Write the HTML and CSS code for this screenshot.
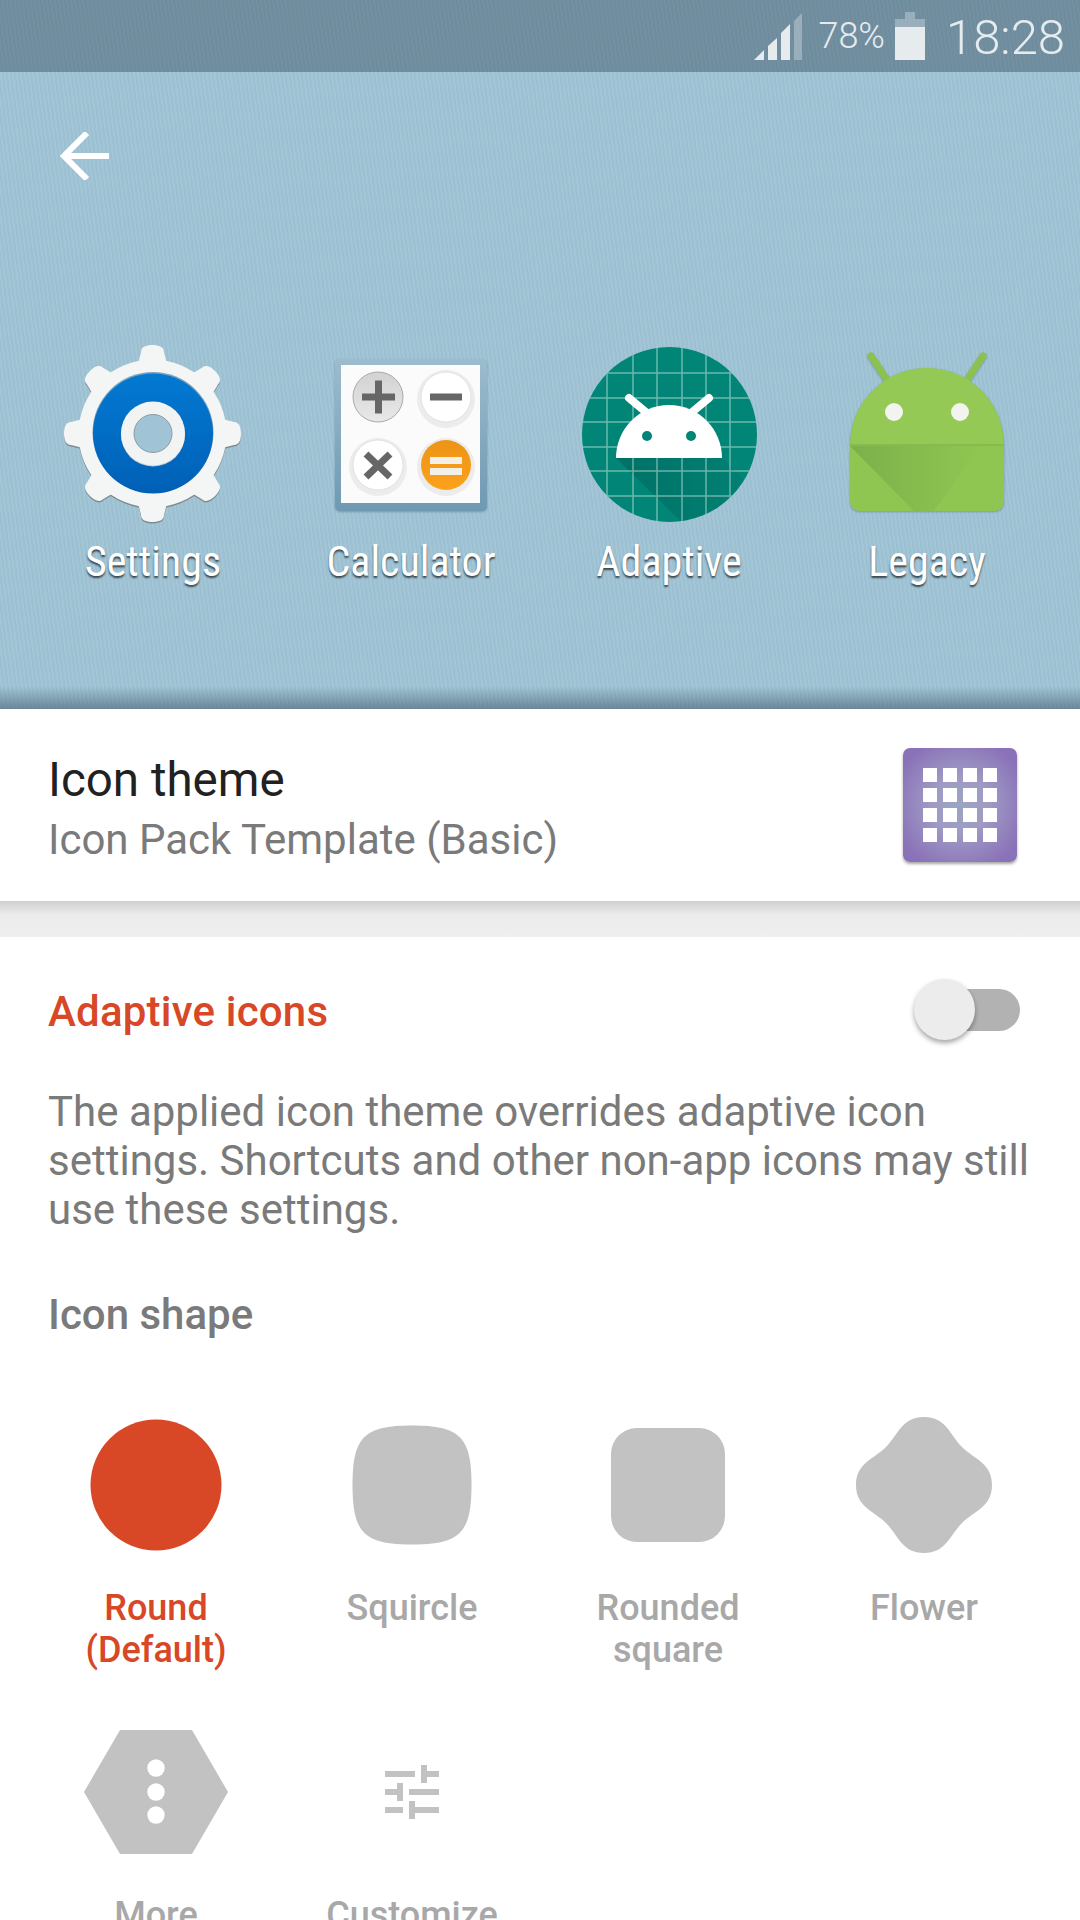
FILE: index.html
```html
<!DOCTYPE html>
<html lang="en">
<head>
<meta charset="utf-8">
<title>Icon theme</title>
<link rel="stylesheet" href="styles.css">
</head>
<body>
<div class="page">
  <header class="hero">
    <div class="status">
      <svg class="signal" viewBox="754 13 48 47"><path fill="#e6ebee" d="M754 60l10-10v10zM768 46l9-8v22h-9zM781 33l9-9v36h-9z"/><path fill="#e6ebee" opacity=".35" d="M794 21l8-8v47h-8z"/></svg>
      <span class="pct">78%</span>
      <svg class="battery" viewBox="0 0 30 48"><path fill="#e6ebee" opacity=".35" d="M10 0h10v7h10v8H0V7h10z"/><path fill="#e6ebee" d="M0 15h30v33H0z"/></svg>
      <span class="clock">18:28</span>
    </div>
    <div class="toolbar">
      <svg class="back" viewBox="0 0 50 48"><path d="M49 24H4M27 1L4 24l23 23" fill="none" stroke="#fff" stroke-width="6"/></svg>
    </div>
    <div class="apps">
      <div class="app">
        <svg class="app-icon" viewBox="53 340 200 190">
          <defs>
            <linearGradient id="blue" x1="0" y1="0" x2="0" y2="1"><stop offset="0" stop-color="#0379d2"/><stop offset="1" stop-color="#0060b6"/></linearGradient>
            <g id="tooth"><path d="M134.500 378L141 352c0-5 5-7 11.500-7s11.500 2 11.500 7l6.500 26z"/></g>
          </defs>
          <g fill="#7e8b90" transform="translate(0 1.500)">
            <circle cx="152.500" cy="433.500" r="74"/>
            <use href="#tooth"/><use href="#tooth" transform="rotate(45 152.500 433.500)"/><use href="#tooth" transform="rotate(90 152.500 433.500)"/><use href="#tooth" transform="rotate(135 152.500 433.500)"/><use href="#tooth" transform="rotate(180 152.500 433.500)"/><use href="#tooth" transform="rotate(225 152.500 433.500)"/><use href="#tooth" transform="rotate(270 152.500 433.500)"/><use href="#tooth" transform="rotate(315 152.500 433.500)"/>
          </g>
          <g fill="#f4f5f5">
            <circle cx="152.500" cy="433.500" r="74"/>
            <use href="#tooth"/><use href="#tooth" transform="rotate(45 152.500 433.500)"/><use href="#tooth" transform="rotate(90 152.500 433.500)"/><use href="#tooth" transform="rotate(135 152.500 433.500)"/><use href="#tooth" transform="rotate(180 152.500 433.500)"/><use href="#tooth" transform="rotate(225 152.500 433.500)"/><use href="#tooth" transform="rotate(270 152.500 433.500)"/><use href="#tooth" transform="rotate(315 152.500 433.500)"/>
          </g>
          <circle cx="153" cy="432.500" r="60.500" fill="#0a4f86" opacity=".5"/>
          <circle cx="153" cy="433.500" r="60" fill="url(#blue)"/>
          <circle cx="153" cy="434.500" r="32" fill="#c8ccce"/>
          <circle cx="153" cy="433.500" r="32" fill="#f2f3f3"/>
          <circle cx="153" cy="433.500" r="19" fill="#a0c4d6" stroke="#8d9aa0" stroke-width="1"/>
        </svg>
        <span class="app-label">Settings</span>
      </div>
      <div class="app">
        <svg class="app-icon soft" viewBox="311 340 200 190">
          <defs>
            <linearGradient id="frame" x1="0" y1="0" x2="0" y2="1"><stop offset="0" stop-color="#9dbccd"/><stop offset="1" stop-color="#6f99b2"/></linearGradient>
            <linearGradient id="plusface" x1="0" y1="0" x2="0" y2="1"><stop offset="0" stop-color="#d2d2d2"/><stop offset="1" stop-color="#e8e8e8"/></linearGradient>
            <linearGradient id="eqface" x1="0" y1="0" x2="0" y2="1"><stop offset="0" stop-color="#ec9417"/><stop offset="1" stop-color="#fda11c"/></linearGradient>
          </defs>
          <rect x="335" y="359" width="152" height="152" rx="5" fill="url(#frame)"/>
          <rect x="341" y="365" width="139" height="138" fill="#fbfbfb"/>
          <circle cx="446" cy="399" r="29" fill="#ececec"/><circle cx="378" cy="467" r="29" fill="#ececec"/><circle cx="446" cy="467" r="29" fill="#ececec"/>
          <circle cx="378" cy="397" r="25" fill="url(#plusface)" stroke="#aaa" stroke-width="1"/>
          <circle cx="446" cy="397" r="25" fill="#fff" stroke="#e2e2e2" stroke-width="1"/>
          <circle cx="378" cy="465" r="25" fill="#fff" stroke="#e2e2e2" stroke-width="1"/>
          <circle cx="446" cy="465" r="25" fill="url(#eqface)"/>
          <path fill="#666" d="M362 393.500h13v-13h7v13h13v7h-13v13h-7v-13h-13zM430 393.500h32v7h-32z"/>
          <path d="M366 454l24 23M390 454l-24 23" stroke="#666" stroke-width="7" fill="none"/>
          <path fill="#f3f0e8" d="M430 457h32v7h-32zM430 468h32v7h-32z"/>
        </svg>
        <span class="app-label">Calculator</span>
      </div>
      <div class="app">
        <svg class="app-icon" viewBox="569 340 200 190">
          <defs>
            <clipPath id="disc"><circle cx="669.500" cy="434.500" r="87.500"/></clipPath>
            <linearGradient id="tealfade" x1="0" y1="0" x2="1" y2="0"><stop offset="0" stop-color="#00645a" stop-opacity=".6"/><stop offset="1" stop-color="#00645a" stop-opacity=".03"/></linearGradient>
            <linearGradient id="greenfade" x1="0" y1="0" x2="1" y2="0"><stop offset="0" stop-color="#7cb04b"/><stop offset="1" stop-color="#8fc651"/></linearGradient>
          </defs>
          <circle cx="669.500" cy="434.500" r="87.500" fill="#008577"/>
          <g clip-path="url(#disc)">
            <path d="M616 458L722 458L775 510L700 540z" fill="url(#tealfade)"/>
            <path stroke="#fff" stroke-opacity=".42" stroke-width="1.500" fill="none" d="M607 340v190M633 340v190M657 340v190M682 340v190M706 340v190M730 340v190M569 373h200M569 398h200M569 422h200M569 447h200M569 471h200M569 496h200"/>
          </g>
          <path d="M647 413l-18-15M691 413l18-15" stroke="#fff" stroke-width="8" stroke-linecap="round"/>
          <path d="M616 458a53 53 0 0 1 106 0z" fill="#fff"/>
          <circle cx="647" cy="436" r="5" fill="#008577"/><circle cx="691" cy="436" r="5" fill="#008577"/>
        </svg>
        <span class="app-label">Adaptive</span>
      </div>
      <div class="app">
        <svg class="app-icon soft" viewBox="827 340 200 190">
          <path d="M871 356l16 24M983 356l-16 24" stroke="#8cc152" stroke-width="7" stroke-linecap="round"/>
          <path d="M850 445a77 77 0 0 1 154 0z" fill="#93c954"/>
          <path d="M850 445h154v57a9 9 0 0 1-9 9H859a9 9 0 0 1-9-9z" fill="#8fc651"/>
          <path d="M850 446L914 511h20L980 446z" fill="url(#greenfade)"/>
          <path d="M850 444h154v2H850z" fill="#86bc4e"/>
          <circle cx="894" cy="412" r="9" fill="#f3f3f0"/><circle cx="960" cy="412" r="9" fill="#f3f3f0"/>
        </svg>
        <span class="app-label">Legacy</span>
      </div>
    </div>
  </header>

  <section class="theme-row">
    <div class="theme-text">
      <div class="theme-title">Icon theme</div>
      <div class="theme-sub">Icon Pack Template (Basic)</div>
    </div>
    <div class="theme-icon">
      <i></i><i></i><i></i><i></i><i></i><i></i><i></i><i></i><i></i><i></i><i></i><i></i><i></i><i></i><i></i><i></i>
    </div>
  </section>
  <div class="band"></div>

  <section class="settings">
    <div class="adaptive-head">
      <span class="adaptive-title">Adaptive icons</span>
      <span class="switch"><span class="thumb"></span></span>
    </div>
    <p class="desc">The applied icon theme overrides adaptive icon settings. Shortcuts and other non-app icons may still use these settings.</p>
    <h2 class="shape-head">Icon shape</h2>
    <div class="shapes">
      <div class="shape active">
        <svg class="shape-icon" viewBox="-70 -70 140 140"><circle r="65.500" fill="#d84726"/></svg>
        <span class="shape-label">Round<br>(Default)</span>
      </div>
      <div class="shape">
        <svg class="shape-icon" viewBox="-70 -70 140 140"><path fill="#c2c2c2" d="M0-59.500C48-59.500 59.500-48 59.500 0S48 59.500 0 59.500-59.500 48-59.500 0-48-59.500 0-59.500z"/></svg>
        <span class="shape-label">Squircle</span>
      </div>
      <div class="shape">
        <svg class="shape-icon" viewBox="-70 -70 140 140"><rect x="-57" y="-57" width="114" height="114" rx="26" fill="#c2c2c2"/></svg>
        <span class="shape-label">Rounded<br>square</span>
      </div>
      <div class="shape">
        <svg class="shape-icon" viewBox="-70 -70 140 140"><path fill="#c2c2c2" d="M0-68C22-68 26-50 38-38S68-22 68 0 50 26 38 38 22 68 0 68-26 50-38 38-68 22-68 0-50-26-38-38-22-68 0-68z"/></svg>
        <span class="shape-label">Flower</span>
      </div>
      <div class="shape">
        <svg class="shape-icon hex" viewBox="-70 -70 140 140"><path fill="#c2c2c2" d="M-36-62H36L72 0 36 62H-36L-72 0z"/><circle cy="-24" r="8.700" fill="#fff"/><circle r="8.700" fill="#fff"/><circle cy="23" r="8.700" fill="#fff"/></svg>
        <span class="shape-label">More</span>
      </div>
      <div class="shape">
        <svg class="shape-icon tune" viewBox="0 0 24 24"><path fill="#c2c2c2" d="M3 17v2h6v-2H3zM3 5v2h10V5H3zm10 16v-2h8v-2h-8v-2h-2v6h2zM7 9v2H3v2h4v2h2V9H7zm14 4v-2H11v2h10zm-6-4h2V7h4V5h-4V3h-2v6z"/></svg>
        <span class="shape-label">Customize</span>
      </div>
    </div>
  </section>
</div>
</body>
</html>
```
FILE: styles.css
```css
* { box-sizing: border-box; }
html, body { margin: 0; padding: 0; background: #fff; }
body { width: 1080px; height: 1920px; overflow: hidden; font-family: Roboto, "Liberation Sans", sans-serif; }
.page { width: 1080px; height: 1920px; overflow: hidden; }

.hero {
  height: 709px;
  background:
    linear-gradient(to bottom, rgba(60,85,100,0) 0, rgba(60,85,100,0) 686px, rgba(60,85,100,.55) 709px),
    repeating-linear-gradient(82deg, rgba(255,255,255,.035) 0 2px, rgba(0,40,70,.025) 2px 4px),
    #a0c4d6;
}
.status {
  height: 72px;
  display: flex;
  align-items: center;
  padding-right: 15px;
  justify-content: flex-end;
  background: rgba(50, 70, 85, .42);
  color: #e6ebee;
  font-weight: 300;
}
.signal { width: 48px; height: 47px; margin-right: 16px; align-self: flex-start; margin-top: 13px; }
.pct { font-size: 36px; margin-right: 10px; }
.battery { width: 30px; height: 48px; margin-right: 21px; }
.clock { font-size: 49px; margin-top: 2px; }

.toolbar { height: 168px; padding: 60px 0 0 60px; }
.back { display: block; width: 50px; height: 48px; }

.apps { display: grid; grid-template-columns: repeat(4, 258px); padding: 0 24px; margin-top: 100px; }
.app { display: flex; flex-direction: column; align-items: center; }
.app-icon { width: 200px; height: 190px; display: block; }
.soft { filter: drop-shadow(0 1px 1px rgba(40,70,90,.35)); }
.app-label {
  color: #fff;
  font-size: 42px;
  line-height: 50px;
  margin-top: 7px;
  font-stretch: 75%;
  text-shadow: 0 2px 2px rgba(0,0,0,.65);
  white-space: nowrap;
}

.theme-row { height: 192px; display: flex; align-items: flex-start; justify-content: space-between; padding: 39px 63px 0 48px; background: #fff; }
.theme-text { padding-top: 4px; }
.theme-title { font-size: 47.500px; line-height: 56px; color: #212121; }
.theme-sub { font-size: 42px; line-height: 64px; color: #7a7a7a; }
.theme-icon {
  width: 114px; height: 114px;
  display: grid; grid-template-columns: repeat(4, 13.500px); grid-auto-rows: 13.500px; gap: 6.500px;
  align-content: center; justify-content: center;
  border-radius: 7px;
  background: radial-gradient(circle at 50% 50%, #9aa6c2 0, #9f9ac4 35%, #8a72b8 85%);
  box-shadow: 0 2px 3px rgba(0,0,0,.35);
}
.theme-icon i { background: #fff; display: block; }

.band { height: 36px; background: linear-gradient(to bottom, #cfcfcf 0, #ececec 14px, #efefef 100%); }

.settings { padding: 0 48px; background: #fff; }
.adaptive-head { height: 145px; display: flex; align-items: center; justify-content: space-between; }
.adaptive-title { color: #d84726; font-size: 42px; font-weight: 500; padding-top: 3px; letter-spacing: .2px; }
.switch { position: relative; display: block; width: 55px; height: 42px; background: #b2b2b2; border-radius: 0 21px 21px 0; margin-right: 12px; }
.thumb { position: absolute; left: -51px; top: -10px; width: 61px; height: 61px; border-radius: 50%; background: #ececec; box-shadow: 0 3px 5px rgba(0,0,0,.35); }
.desc { margin: 5px 0 0; font-size: 42px; line-height: 49px; color: #7a7a7a; width: 990px; }
.shape-head { margin: 0; padding-top: 56px; font-size: 42px; line-height: 49px; font-weight: 500; color: #7a7a7a; }
.shapes { display: grid; grid-template-columns: repeat(4, 256px); margin: 76px -20px 0; }
.shape { display: flex; flex-direction: column; align-items: center; text-align: center; height: 317px; }
.shape:nth-child(n+5) { height: auto; margin-top: -10px; }
.shape-icon { width: 140px; height: 140px; display: block; flex: none; }
.hex { overflow: visible; }
.tune { width: 72px; height: 72px; margin: 34px; }
.shape-label { margin-top: 32px; font-size: 36px; line-height: 42px; font-weight: 500; color: #a8a8a8; white-space: nowrap; }
.active .shape-label { color: #d84726; }
```
